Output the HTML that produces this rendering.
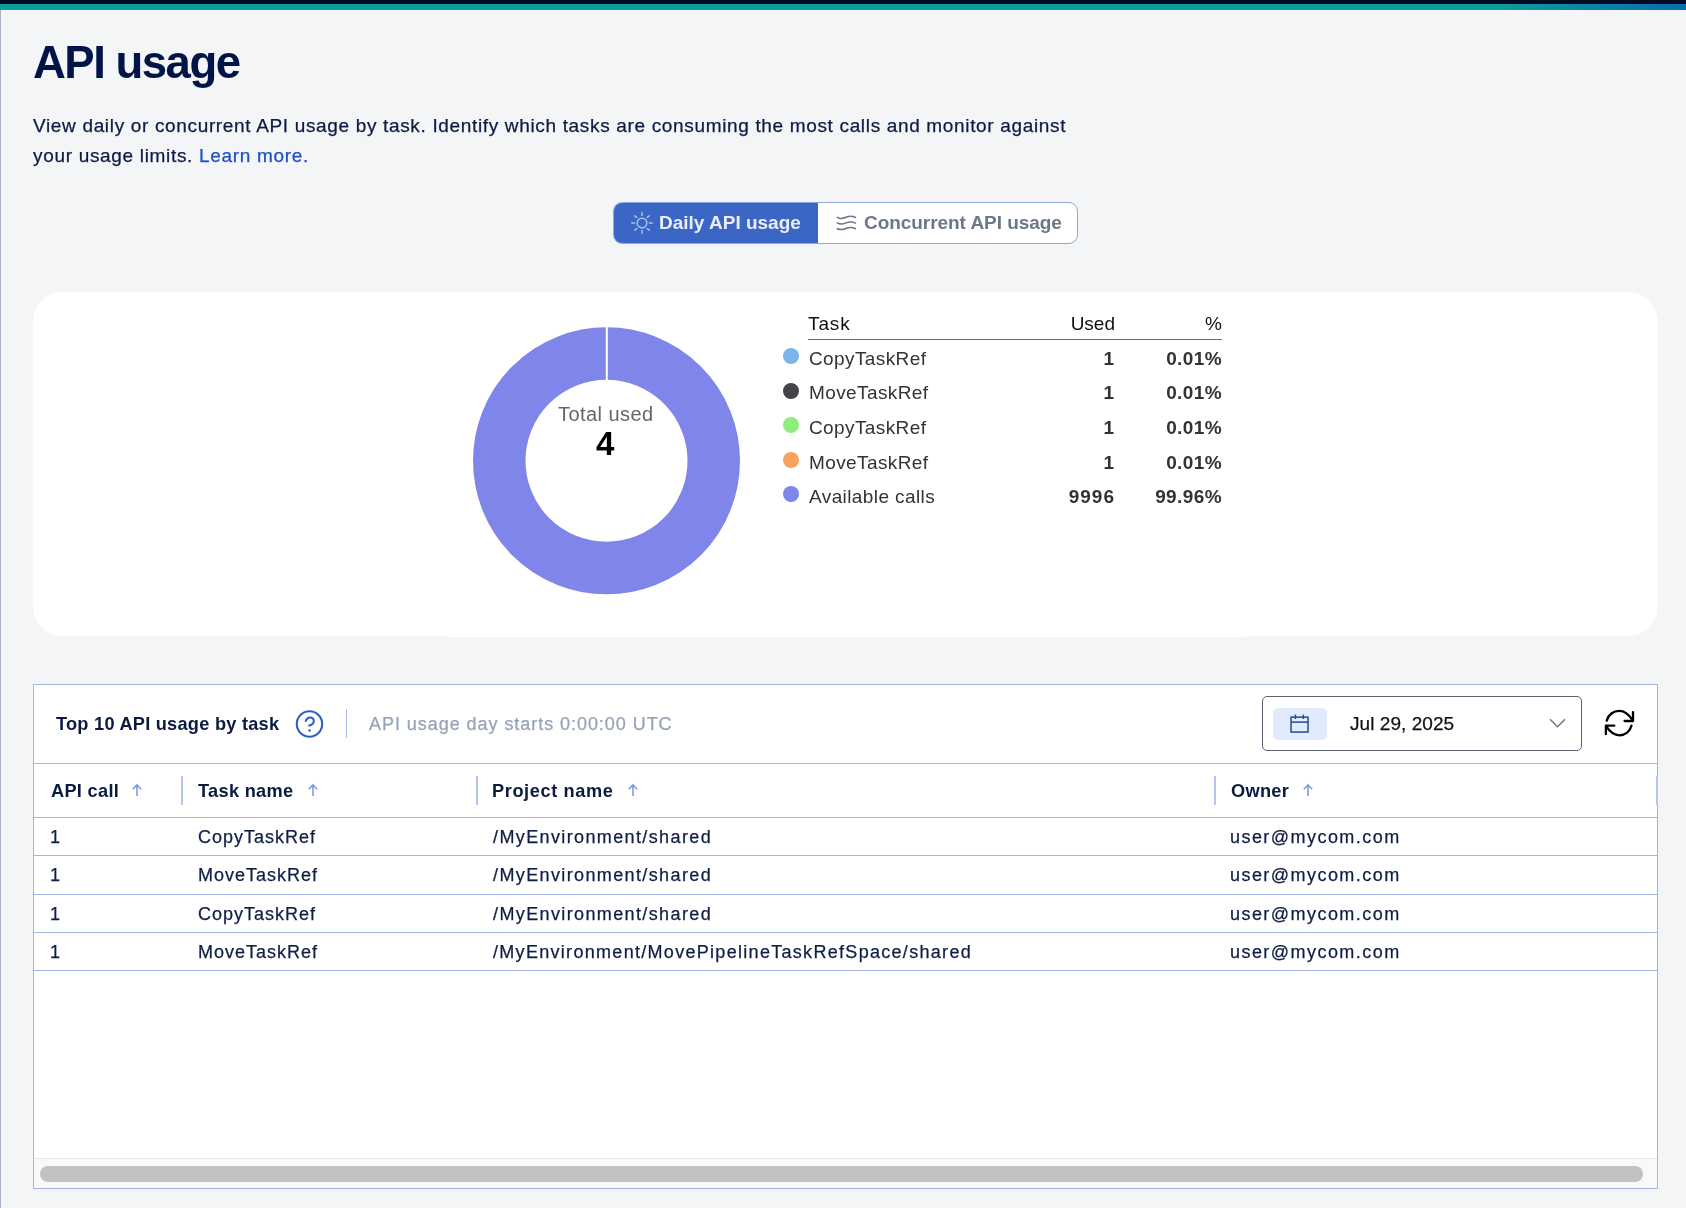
<!DOCTYPE html>
<html><head><meta charset="utf-8">
<style>
*{margin:0;padding:0;box-sizing:border-box}
html,body{width:1686px;height:1208px;overflow:hidden;background:#f4f5f7;font-family:"Liberation Sans",sans-serif;position:relative}
.t{position:absolute;white-space:nowrap;line-height:1;will-change:transform}
.r{-webkit-text-stroke:0.25px currentColor}
.topbar{position:absolute;left:0;top:0;width:1686px;height:4px;background:#020b24}
.teal{position:absolute;left:0;top:4px;width:1686px;height:6px;background:linear-gradient(90deg,#0e9c9a 0,#0e9c9a 1500px,#0a6db0 1686px)}
.lborder{position:absolute;left:0;top:10px;width:1px;height:1198px;background:#aab3c6}
.seg{position:absolute;left:613px;top:202px;width:465px;height:42px;border:1px solid #8fa7e2;border-radius:9px;background:#fff;overflow:hidden}
.seg .on{position:absolute;left:-1px;top:-1px;width:205px;height:42px;background:#3b66c5}
.card{position:absolute;left:33px;top:292px;width:1625px;height:344px;background:#fff;border-radius:30px}
.tbl{position:absolute;left:33px;top:684px;width:1625px;height:505px;border:1px solid #a0b5e2;background:#fff}
.hl{position:absolute;height:1px;background:#a0b5e2}
.vd{position:absolute;width:2px;background:#b4c6ec}
.dot{position:absolute;width:16px;height:16px;border-radius:50%}
</style></head>
<body>
<div class="topbar"></div><div class="teal"></div><div class="lborder"></div>

<div class="t" style="left:32.5px;top:39.5px;font-size:45.5px;font-weight:bold;color:#021447;letter-spacing:-1.5px">API usage</div>
<div class="t r" style="left:33px;top:116px;font-size:19px;color:#0c1b43;letter-spacing:0.66px">View daily or concurrent API usage by task. Identify which tasks are consuming the most calls and monitor against</div>
<div class="t r" style="left:33px;top:145.7px;font-size:19px;color:#0c1b43;letter-spacing:0.68px">your usage limits. <span style="color:#1e4fc6">Learn more.</span></div>

<div class="seg"><div class="on"></div></div>

<svg style="position:absolute;left:630.4px;top:211px" width="24" height="24" viewBox="0 0 24 24">
<g stroke="#b0c2ec" stroke-width="1.5" fill="none" stroke-linecap="round">
<circle cx="12" cy="12" r="4.8"/>
<path d="M12 1.8v2.8M12 19.4v2.8M1.8 12h2.8M19.4 12h2.8M4.8 4.8l1.9 1.5M17.3 17.6l1.9 1.5M4.8 19.1l1.9-1.5M17.3 6.4l1.9-1.5"/>
</g></svg>
<svg style="position:absolute;left:834px;top:212px" width="25" height="22" viewBox="0 0 25 22">
<g stroke="#6b778a" stroke-width="1.5" fill="none" stroke-linecap="round">
<path transform="translate(0 0)" d="M3.3 5.3C6 7 9 6.6 12 5.3S17.5 3.6 21.5 5.5"/>
<path transform="translate(0 5.6)" d="M3.3 5.3C6 7 9 6.6 12 5.3S17.5 3.6 21.5 5.5"/>
<path transform="translate(0 11.2)" d="M3.3 5.3C6 7 9 6.6 12 5.3S17.5 3.6 21.5 5.5"/>
</g></svg>
<div class="t" style="left:659.2px;top:212.9px;font-size:19px;font-weight:bold;color:#e9edf7">Daily API usage</div>
<div class="t" style="left:863.6px;top:212.8px;font-size:19px;font-weight:bold;color:#6c7789;letter-spacing:-0.05px">Concurrent API usage</div>

<div class="card"></div>
<div style="position:absolute;left:446px;top:636px;width:800px;height:1px;background:#fff"></div>

<svg style="position:absolute;left:0;top:0" width="1686" height="1208">
<circle cx="606.5" cy="460.8" r="107.25" fill="none" stroke="#8085e9" stroke-width="52.5"/>
<rect x="605.8" y="326" width="2" height="55" fill="#fff"/>
</svg>
<div class="t" style="left:557.6px;top:404.3px;font-size:20px;color:#666;letter-spacing:0.45px">Total used</div>
<div class="t" style="left:595.5px;top:427.2px;font-size:33px;font-weight:bold;color:#000">4</div>

<div class="t" style="left:808px;top:313.9px;font-size:19px;color:#111;letter-spacing:0.9px">Task</div>
<div class="t" style="left:1000px;width:115px;text-align:right;top:313.9px;font-size:19px;color:#111">Used</div>
<div class="t" style="left:1122px;width:100px;text-align:right;top:313.9px;font-size:19px;color:#111">%</div>
<div class="hl" style="left:808px;top:339px;width:414px;background:#6b6b6b"></div>
<div class="dot" style="left:783.2px;top:348.1px;background:#7cb5ec"></div>
<div class="t" style="left:808.5px;top:348.8px;font-size:19px;color:#333;letter-spacing:0.4px">CopyTaskRef</div>
<div class="t" style="left:1000px;width:115px;text-align:right;top:348.8px;font-size:19px;font-weight:bold;color:#333;letter-spacing:1px;margin-right:-1px">1</div>
<div class="t" style="left:1122px;width:100px;text-align:right;top:348.8px;font-size:19px;font-weight:bold;color:#333;letter-spacing:0.4px">0.01%</div>
<div class="dot" style="left:783.2px;top:382.6px;background:#434348"></div>
<div class="t" style="left:808.5px;top:383.4px;font-size:19px;color:#333;letter-spacing:0.4px">MoveTaskRef</div>
<div class="t" style="left:1000px;width:115px;text-align:right;top:383.4px;font-size:19px;font-weight:bold;color:#333;letter-spacing:1px;margin-right:-1px">1</div>
<div class="t" style="left:1122px;width:100px;text-align:right;top:383.4px;font-size:19px;font-weight:bold;color:#333;letter-spacing:0.4px">0.01%</div>
<div class="dot" style="left:783.2px;top:417.2px;background:#90ed7d"></div>
<div class="t" style="left:808.5px;top:417.9px;font-size:19px;color:#333;letter-spacing:0.4px">CopyTaskRef</div>
<div class="t" style="left:1000px;width:115px;text-align:right;top:417.9px;font-size:19px;font-weight:bold;color:#333;letter-spacing:1px;margin-right:-1px">1</div>
<div class="t" style="left:1122px;width:100px;text-align:right;top:417.9px;font-size:19px;font-weight:bold;color:#333;letter-spacing:0.4px">0.01%</div>
<div class="dot" style="left:783.2px;top:451.7px;background:#f7a35c"></div>
<div class="t" style="left:808.5px;top:452.5px;font-size:19px;color:#333;letter-spacing:0.4px">MoveTaskRef</div>
<div class="t" style="left:1000px;width:115px;text-align:right;top:452.5px;font-size:19px;font-weight:bold;color:#333;letter-spacing:1px;margin-right:-1px">1</div>
<div class="t" style="left:1122px;width:100px;text-align:right;top:452.5px;font-size:19px;font-weight:bold;color:#333;letter-spacing:0.4px">0.01%</div>
<div class="dot" style="left:783.2px;top:486.3px;background:#8085e9"></div>
<div class="t" style="left:808.5px;top:487.0px;font-size:19px;color:#333;letter-spacing:0.4px">Available calls</div>
<div class="t" style="left:1000px;width:115px;text-align:right;top:487.0px;font-size:19px;font-weight:bold;color:#333;letter-spacing:1px;margin-right:-1px">9996</div>
<div class="t" style="left:1122px;width:100px;text-align:right;top:487.0px;font-size:19px;font-weight:bold;color:#333;letter-spacing:0.4px">99.96%</div>

<div class="tbl"></div>

<div class="t" style="left:56px;top:714.8px;font-size:18.2px;font-weight:bold;color:#0b1a41;letter-spacing:0.25px">Top 10 API usage by task</div>
<svg style="position:absolute;left:295px;top:709px" width="30" height="30" viewBox="0 0 30 30">
<circle cx="14.5" cy="15" r="12.7" fill="none" stroke="#2f5fc8" stroke-width="2.1"/>
<path d="M10.8 11.9C11.6 9.7 13.3 8.5 15.2 8.5C17.3 8.5 18.8 10.1 18.8 12.2C18.8 14.5 16.6 15.8 14.1 16.4" fill="none" stroke="#2f5fc8" stroke-width="2.1" stroke-linecap="round"/>
<circle cx="14.5" cy="21.5" r="1.25" fill="#2f5fc8"/>
</svg>
<div style="position:absolute;left:345.5px;top:709px;width:1.5px;height:29px;background:#a9bde6"></div>
<div class="t r" style="left:368.5px;top:714.5px;font-size:18px;color:#97a2b7;letter-spacing:0.95px">API usage day starts 0:00:00 UTC</div>

<div style="position:absolute;left:1262px;top:696px;width:320px;height:55px;border:1.3px solid #5d6373;border-radius:5px;background:#fff"></div>
<div style="position:absolute;left:1273px;top:708px;width:54px;height:32px;border-radius:5px;background:#e1ebfd"></div>
<svg style="position:absolute;left:1288px;top:713px" width="24" height="22" viewBox="0 0 24 22">
<rect x="3.05" y="4.15" width="17" height="14.9" fill="none" stroke="#1f4d94" stroke-width="1.5"/>
<line x1="3" y1="9.1" x2="20" y2="9.1" stroke="#1f4d94" stroke-width="1.5"/>
<line x1="7.4" y1="1.6" x2="7.4" y2="6" stroke="#1f4d94" stroke-width="1.5"/>
<line x1="15.3" y1="1.6" x2="15.3" y2="6" stroke="#1f4d94" stroke-width="1.5"/>
</svg>
<div class="t r" style="left:1349.5px;top:714.2px;font-size:19px;color:#111;letter-spacing:0.05px">Jul 29, 2025</div>
<svg style="position:absolute;left:1548px;top:716px" width="19" height="14" viewBox="0 0 19 14">
<path d="M2 3.2l7.5 7.5 7.5-7.5" fill="none" stroke="#6f7380" stroke-width="1.5"/>
</svg>
<svg style="position:absolute;left:1595px;top:700px" width="50" height="45" viewBox="0 0 50 45">
<g fill="none" stroke="#000" stroke-width="2.3" stroke-linecap="round" stroke-linejoin="round">
<path d="M11.7 20.6C13.2 14.6 18.4 10.9 24.4 10.9C29.3 10.9 33.2 13.5 37.6 20.2"/>
<path d="M38 12.2V21H29.6"/>
<path d="M36.5 25.6C35 31.4 30.2 35.3 24.4 35.3C19.5 35.3 15.5 32.8 11.3 26.4"/>
<path d="M10.9 34.2V25.7H19.3"/>
</g></svg>

<div class="hl" style="left:34px;top:763px;width:1623px"></div>
<div class="hl" style="left:34px;top:817px;width:1623px"></div>
<div class="t" style="left:50.6px;top:781.6px;font-size:18.2px;font-weight:bold;color:#0b1a41;letter-spacing:0.3px">API call</div>
<svg style="position:absolute;left:130.5px;top:783px" width="12" height="14" viewBox="0 0 12 14"><path d="M6 13V2M1.8 6.2L6 2l4.2 4.2" fill="none" stroke="#7d9de0" stroke-width="1.6"/></svg>
<div class="t" style="left:198px;top:781.6px;font-size:18.2px;font-weight:bold;color:#0b1a41;letter-spacing:0.3px">Task name</div>
<svg style="position:absolute;left:306.5px;top:783px" width="12" height="14" viewBox="0 0 12 14"><path d="M6 13V2M1.8 6.2L6 2l4.2 4.2" fill="none" stroke="#7d9de0" stroke-width="1.6"/></svg>
<div class="t" style="left:492.3px;top:781.6px;font-size:18.2px;font-weight:bold;color:#0b1a41;letter-spacing:0.6px">Project name</div>
<svg style="position:absolute;left:626.5px;top:783px" width="12" height="14" viewBox="0 0 12 14"><path d="M6 13V2M1.8 6.2L6 2l4.2 4.2" fill="none" stroke="#7d9de0" stroke-width="1.6"/></svg>
<div class="t" style="left:1231px;top:781.6px;font-size:18.2px;font-weight:bold;color:#0b1a41;letter-spacing:0.3px">Owner</div>
<svg style="position:absolute;left:1301.5px;top:783px" width="12" height="14" viewBox="0 0 12 14"><path d="M6 13V2M1.8 6.2L6 2l4.2 4.2" fill="none" stroke="#7d9de0" stroke-width="1.6"/></svg>
<div class="vd" style="left:181px;top:776px;height:29px"></div>
<div class="vd" style="left:476px;top:776px;height:29px"></div>
<div class="vd" style="left:1213.5px;top:776px;height:29px"></div>
<div class="vd" style="left:1655.5px;top:776px;height:29px"></div>
<div class="t r" style="left:50px;top:828.0px;font-size:18px;color:#0e1e44;letter-spacing:0px">1</div>
<div class="t r" style="left:198px;top:828.0px;font-size:18px;color:#0e1e44;letter-spacing:1.0px">CopyTaskRef</div>
<div class="t r" style="left:493px;top:828.0px;font-size:18px;color:#0e1e44;letter-spacing:1.38px">/MyEnvironment/shared</div>
<div class="t r" style="left:1229.7px;top:828.0px;font-size:18px;color:#0e1e44;letter-spacing:1.45px">user@mycom.com</div>
<div class="hl" style="left:34px;top:855px;width:1623px"></div>
<div class="t r" style="left:50px;top:866.3px;font-size:18px;color:#0e1e44;letter-spacing:0px">1</div>
<div class="t r" style="left:198px;top:866.3px;font-size:18px;color:#0e1e44;letter-spacing:1.0px">MoveTaskRef</div>
<div class="t r" style="left:493px;top:866.3px;font-size:18px;color:#0e1e44;letter-spacing:1.38px">/MyEnvironment/shared</div>
<div class="t r" style="left:1229.7px;top:866.3px;font-size:18px;color:#0e1e44;letter-spacing:1.45px">user@mycom.com</div>
<div class="hl" style="left:34px;top:894px;width:1623px"></div>
<div class="t r" style="left:50px;top:904.6px;font-size:18px;color:#0e1e44;letter-spacing:0px">1</div>
<div class="t r" style="left:198px;top:904.6px;font-size:18px;color:#0e1e44;letter-spacing:1.0px">CopyTaskRef</div>
<div class="t r" style="left:493px;top:904.6px;font-size:18px;color:#0e1e44;letter-spacing:1.38px">/MyEnvironment/shared</div>
<div class="t r" style="left:1229.7px;top:904.6px;font-size:18px;color:#0e1e44;letter-spacing:1.45px">user@mycom.com</div>
<div class="hl" style="left:34px;top:932px;width:1623px"></div>
<div class="t r" style="left:50px;top:942.9px;font-size:18px;color:#0e1e44;letter-spacing:0px">1</div>
<div class="t r" style="left:198px;top:942.9px;font-size:18px;color:#0e1e44;letter-spacing:1.0px">MoveTaskRef</div>
<div class="t r" style="left:493px;top:942.9px;font-size:18px;color:#0e1e44;letter-spacing:1.3px">/MyEnvironment/MovePipelineTaskRefSpace/shared</div>
<div class="t r" style="left:1229.7px;top:942.9px;font-size:18px;color:#0e1e44;letter-spacing:1.45px">user@mycom.com</div>
<div class="hl" style="left:34px;top:970px;width:1623px"></div>

<div style="position:absolute;left:34px;top:1158px;width:1623px;height:30px;background:#f9f9f9;border-top:1px solid #e6e6e6"></div>
<div style="position:absolute;left:40px;top:1166px;width:1603px;height:16px;border-radius:8px;background:#c1c1c1"></div>

</body></html>
